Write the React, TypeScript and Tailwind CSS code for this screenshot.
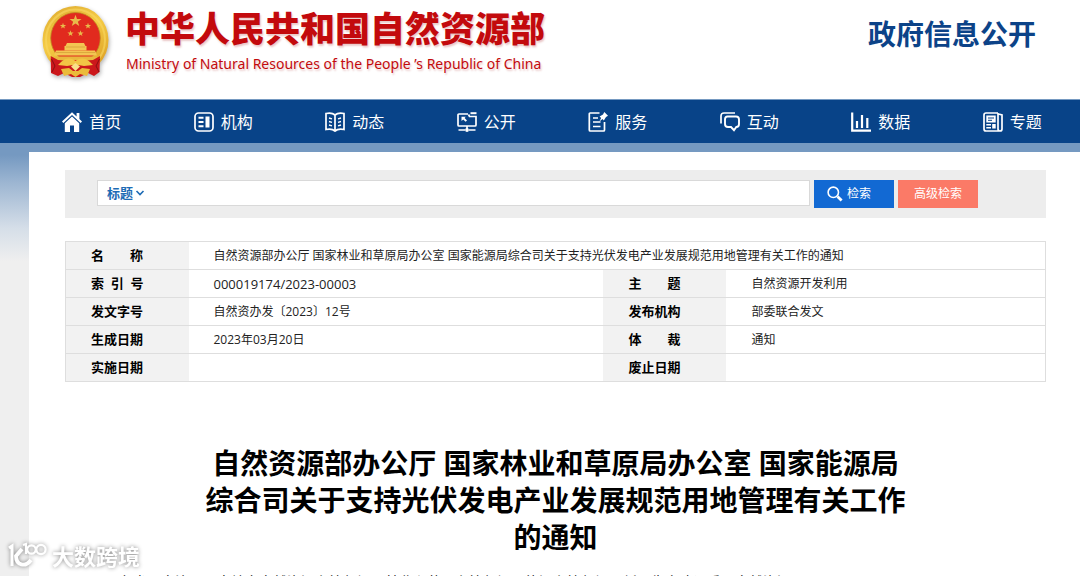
import React from "react";

const sans = "font-['Open_Sans','Noto_Sans_CJK_SC',sans-serif]";

function Emblem() {
  const star = "M0 -5 L1.2 -1.6 L4.8 -1.6 L1.9 0.6 L3 4 L0 1.9 L-3 4 L-1.9 0.6 L-4.8 -1.6 L-1.2 -1.6 Z";
  return (
    <svg viewBox="0 0 68 72" className="h-[72px] w-[68px] shrink-0 drop-shadow-[1px_2px_2px_rgba(0,0,0,0.3)]" aria-hidden="true">
      <defs>
        <linearGradient id="gold" x1="0" y1="0" x2="0.5" y2="1">
          <stop offset="0" stopColor="#dda92f" />
          <stop offset="0.5" stopColor="#f5cb45" />
          <stop offset="1" stopColor="#e0a528" />
        </linearGradient>
      </defs>
      <ellipse cx="33.5" cy="34" rx="33" ry="34" fill="url(#gold)" />
      <ellipse cx="33.5" cy="34" rx="29.5" ry="30.5" fill="none" stroke="#f8d963" strokeOpacity="0.6" strokeWidth="2" />
      <ellipse cx="33.5" cy="32" rx="24.8" ry="25.5" fill="#e12a1e" stroke="#c08a22" strokeWidth="0.8" />
      <g fill="#e9b94a">
        <path d={star} transform="translate(33.5 15) scale(1.25)" />
        <path d={star} transform="translate(21 20) scale(0.65)" />
        <path d={star} transform="translate(46 20) scale(0.65)" />
        <path d={star} transform="translate(28.5 27.5) scale(0.65)" />
        <path d={star} transform="translate(38.5 27.5) scale(0.65)" />
      </g>
      <g fill="#f3c552">
        <path d="M25 37 H42 L43.5 40 H44.5 V44.5 H22.5 V40 H23.5 Z" />
        <path d="M14 44.5 H53 L55 49.5 H12 Z" />
      </g>
      <path d="M24 41 H43 M14 46.5 H53" stroke="#cf9630" strokeWidth="0.6" />
      <path d="M12 50.5 H56 L53 54 H15 Z" fill="#e9b83e" />
      <path d="M8.7 50 L16 54 L27 55 L33.5 61 L40 55 L51 54 L58 50 L57.5 66 L52 70 L46 67 L38 71 H30 L22 67 L16 70 L9 67 Z" fill="#cc171b" />
      <path d="M9.5 53 L13 60 L10 66 M57.5 53 L54 60 L57 66" stroke="#8a0e12" strokeWidth="1" fill="none" />
      <path d="M19 56 C24 51 30 52 33.5 55 C37 52 43 51 48 56 L51 59 L42 60 L33.5 58.5 L25 60 L16 59 Z" fill="#f2c545" />
      <path d="M19 63 L27 62 L31 65 H36 L40 62 L48 63 L45 70 L38 68 L33.5 71 L29 68 L22 70 Z" fill="#ebbb3a" />
      <path d="M29 60.5 L33.5 57 L38 60.5 L33.5 65 Z" fill="#f9e08a" />
    </svg>
  );
}

const icons: Record<string, React.ReactNode> = {
  home: (
    <g fill="#fff" stroke="none">
      <path d="M10 0.2 L14.6 4.4 V1 H17.4 V7 L20 9.6 L18.6 11 L10 2.9 L1.4 11 L0 9.6 Z" />
      <path d="M10 4.6 L17.2 11.3 V20 H12 V13.5 H8 V20 H2.8 V11.3 Z" />
    </g>
  ),
  org: (
    <>
      <rect x="1" y="1" width="18" height="18" rx="3.5" />
      <rect x="11.5" y="4.5" width="4" height="11" fill="#fff" stroke="none" />
      <path d="M4.5 5.7 H9.5 M4.5 10 H9.5 M4.5 14.3 H9.5" strokeWidth="2" />
    </>
  ),
  news: (
    <>
      <path d="M10 3 C7.5 0.8 4 0.8 1 1.5 V17.5 C4 16.8 7.5 16.8 10 19 C12.5 16.8 16 16.8 19 17.5 V1.5 C16 0.8 12.5 0.8 10 3 Z M10 3 V19" />
      <path d="M4 6 L7 6.8 M4 9.5 L7 10.3 M4 13 L7 13.8 M16 6 L13 6.8 M16 9.5 L13 10.3 M16 13 L13 13.8" strokeWidth="1.3" />
    </>
  ),
  open: (
    <>
      <path d="M11 2 H2 C1.3 2 1 2.4 1 3 V13 C1 13.7 1.4 14 2 14 H18 C18.7 14 19 13.6 19 13 V4.5 H12.5 L11.5 2.5" />
      <path d="M13.5 1.2 H19.5" strokeWidth="2" />
      <path d="M10 14 V18 M1.5 18 H8 M12 18 H18.5" />
      <path d="M4.5 4.8 H8.8 L7.6 6 L10 8.4 L8.6 9.8 L6.2 7.4 L4.5 9 Z" fill="#fff" stroke="none" />
      <circle cx="10" cy="18" r="1.9" fill="#fff" stroke="none" />
    </>
  ),
  service: (
    <>
      <path d="M11.5 1 H2.2 C1.6 1 1.3 1.4 1.3 2 V18 C1.3 18.6 1.7 19 2.3 19 H15.5 C16.1 19 16.5 18.6 16.5 18 V10" />
      <path d="M5 6 H10 M5 10 H12.5 M5 14.5 H12.5" />
      <path d="M16.3 0 L20 3.7 L18 5 L15.8 8.4 L14.5 7.1 L11.4 9.4 L13.1 6 L11.6 4.4 L15 2.6 Z" fill="#fff" stroke="none" />
    </>
  ),
  chat: (
    <>
      <path d="M1 11.5 V4 C1 2 2 1 4 1 H15" />
      <path d="M7.5 4.5 H16 C18 4.5 19 5.5 19 7.5 V12 C19 14 18 15 16.3 15 L14 18.2 L11 15 H8 C6 15 5 14 5 12 V7.5 C5 5.5 6 4.5 7.5 4.5 Z" strokeWidth="1.9" />
    </>
  ),
  data: (
    <path d="M1.2 0.5 V18.7 H20 M6 9 V16 M11 3 V16 M16.3 6 V16" strokeWidth="2.2" />
  ),
  topic: (
    <>
      <path d="M15 1 H3 C1.7 1 1 1.7 1 3 V17 C1 18.3 1.7 19 3 19 H17 C18.4 19 19 18 19 17 V3 L15.5 2 M15 1 V17 C15 18.3 15.7 19 17 19" />
      <path d="M3.3 3.6 H12.7 V10.5 H3.3 Z M3.3 12 H8 V13.5 H3.3 Z M3.3 15 H8 V16.6 H3.3 Z M9.2 12 H12.7 V16.6 H9.2 Z" fill="#fff" stroke="none" />
      <path d="M5 6 H11 M5 8.3 H9" stroke="#084388" strokeWidth="1" />
    </>
  ),
};

const nav = [
  ["home", "首页"],
  ["org", "机构"],
  ["news", "动态"],
  ["open", "公开"],
  ["service", "服务"],
  ["chat", "互动"],
  ["data", "数据"],
  ["topic", "专题"],
];

const rows = [
  ["索\u00a0\u00a0引\u00a0\u00a0号", "000019174/2023-00003", "主　　题", "自然资源开发利用"],
  ["发文字号", "自然资办发〔2023〕12号", "发布机构", "部委联合发文"],
  ["生成日期", "2023年03月20日", "体　　裁", "通知"],
  ["实施日期", "", "废止日期", ""],
];

function Label({ children }: { children: React.ReactNode }) {
  return (
    <th scope="row" className="h-7 bg-[#f2f2f2] p-0 pb-0.5 pl-[25px] text-left text-[13px] leading-5 font-bold text-black">
      {children}
    </th>
  );
}

function Watermark() {
  return (
    <div className="absolute bottom-[5px] left-2 flex items-center gap-1 text-white drop-shadow-[0_0_2px_rgba(0,0,0,0.45)]">
      <svg viewBox="0 0 40 30" className="h-[30px] w-10" fill="none" stroke="#fff" strokeWidth="3" aria-hidden="true">
        <path d="M1 7 L4 5 V25" />
        <path d="M14 8 L8 15 C8 24 17 27 23 19" strokeWidth="3.8" />
        <path d="M15 4 L18 3 V13" strokeWidth="2.2" />
        <circle cx="23.5" cy="8.5" r="4.2" strokeWidth="2.2" />
        <circle cx="33" cy="8.5" r="4.6" strokeWidth="2.2" />
      </svg>
      <span className="text-[22px] leading-[30px] font-bold">大数跨境</span>
    </div>
  );
}

export default function App() {
  return (
    <div className={`relative flex h-screen flex-col overflow-hidden bg-white ${sans}`}>
      <header className="flex h-[99px] shrink-0 items-start justify-between pr-11 pl-[42px]">
        <a href="#" className="flex pt-[6px]">
          <Emblem />
          <div className="pl-[15px] text-[#c30a0d] [text-shadow:1px_2px_2px_rgba(160,0,0,0.22)]">
            <h1 className="text-[35px] leading-[46px] font-black whitespace-nowrap">中华人民共和国自然资源部</h1>
            <p className="pl-px font-['Noto_Sans',sans-serif] text-[14px] leading-6 whitespace-nowrap">
              Ministry of Natural Resources of the People ’s Republic of China
            </p>
          </div>
        </a>
        <p className="pt-[14px] text-[28px] leading-10 font-bold text-[#0c4388]">政府信息公开</p>
      </header>

      <nav className="h-11 shrink-0 border-t border-[#7599c1] bg-[#084388] pr-[2px] pl-[26px]">
        <ul className="grid h-full grid-cols-8">
          {nav.map(([icon, label]) => (
            <li key={icon} className="flex items-center justify-center">
              <a href="#" className="flex items-center gap-[7px] text-[16px] leading-6 text-white">
                <svg viewBox="0 0 20 20" className="size-5" fill="none" stroke="#fff" strokeWidth="1.7" aria-hidden="true">
                  {icons[icon]}
                </svg>
                {label}
              </a>
            </li>
          ))}
        </ul>
      </nav>

      <div className="min-h-0 grow bg-[#efefef] bg-[linear-gradient(to_bottom,#7599c1_0px,#7599c1_12px,#9db6d2_40px,#d5dee8_85px,#efefef_118px)] pt-[9px] pl-[29px]">
        <main className="h-full bg-white pt-[18px] pr-[34px] pl-9">
          <form className="flex h-12 items-start gap-1 bg-[#ededed] pt-[10px] pr-[68px] pl-8" onSubmit={(e) => e.preventDefault()}>
            <div className="flex h-[26px] grow border border-[#d9d9d9] bg-white">
              <div className="grid shrink-0 items-center">
                <select aria-label="检索范围" className="col-start-1 row-start-1 w-[50px] appearance-none bg-transparent pl-[9px] text-[13px] leading-5 font-bold text-[#1d6bb5] outline-none">
                  <option>标题</option>
                </select>
                <svg viewBox="0 0 10 6" className="pointer-events-none col-start-1 row-start-1 mr-[3px] h-[6px] w-[10px] justify-self-end" fill="none" stroke="#1d6bb5" strokeWidth="1.6" aria-hidden="true">
                  <path d="M1.5 1 L5 4.5 L8.5 1" />
                </svg>
              </div>
              <input type="text" aria-label="检索词" className="min-w-0 grow bg-transparent px-2 text-[13px] outline-none" />
            </div>
            <button type="submit" className="flex h-7 w-20 items-center gap-1 bg-[#1269d3] pl-[13px] text-[12px] leading-5 text-white">
              <svg viewBox="0 0 16 16" className="size-4" fill="none" stroke="#fff" aria-hidden="true">
                <circle cx="6.3" cy="6.3" r="5.2" strokeWidth="1.6" />
                <path d="M10.5 10.5 L14.6 14.6" strokeWidth="2.8" />
              </svg>
              检索
            </button>
            <button type="button" className="flex h-7 w-20 items-center justify-center bg-[#fb7a67] text-[12px] leading-5 text-white">
              高级检索
            </button>
          </form>

          <table className="mt-[23px] w-full table-fixed border-collapse border border-[#dedede] text-[12px] leading-5 text-[#222]">
            <colgroup>
              <col className="w-[123px]" />
              <col />
              <col className="w-[123px]" />
              <col className="w-[319px]" />
            </colgroup>
            <tbody>
              <tr className="border-b border-[#dedede]">
                <Label>名　　称</Label>
                <td colSpan={3} className="p-0 pl-[25px] whitespace-nowrap">
                  自然资源部办公厅 国家林业和草原局办公室 国家能源局综合司关于支持光伏发电产业发展规范用地管理有关工作的通知
                </td>
              </tr>
              {rows.map(([a, b, c, d], i) => (
                <tr key={a} className="border-b border-[#dedede]">
                  <Label>{a}</Label>
                  <td className={i === 0 ? "p-0 pl-[25px] text-[13px]" : "p-0 pl-[25px]"}>{b}</td>
                  <Label>{c}</Label>
                  <td className="p-0 pl-[25px]">{d}</td>
                </tr>
              ))}
            </tbody>
          </table>

          <article>
            <h2 className="mx-auto mt-[63px] max-w-[710px] text-center text-[28px] leading-[37px] font-bold text-black">
              自然资源部办公厅 国家林业和草原局办公室 国家能源局综合司关于支持光伏发电产业发展规范用地管理有关工作的通知
            </h2>
            <p className="mt-[14px] pl-[54px] text-[14px] leading-6 text-[#222]">
              各省、自治区、直辖市自然资源主管部门、林业和草原主管部门、能源主管部门，新疆生产建设兵团自然资源局
            </p>
          </article>
        </main>
      </div>

      <Watermark />
    </div>
  );
}
